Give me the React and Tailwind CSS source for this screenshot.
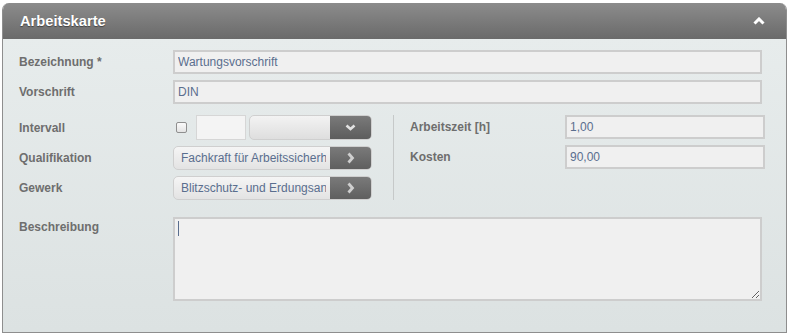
import React from "react";

const font = { fontFamily: '"Liberation Sans", Arial, sans-serif' };

function Label({ children, className = "" }) {
  return (
    <div className={`w-[154px] shrink-0 text-[12px] font-bold leading-[16px] text-[#6e6e6e] ${className}`}>
      {children}
    </div>
  );
}

function TextInput({ value, className = "" }) {
  return (
    <input
      readOnly
      value={value}
      className={`h-[24px] border-2 border-[#cdcdcd] bg-[#f0f0f0] px-[3px] text-[12px] text-[#5a6e8e] outline-none ${className}`}
    />
  );
}

function ChevronDown() {
  return (
    <svg width="11" height="7" viewBox="0 0 11 7">
      <polyline points="1.5,1.5 5.5,5 9.5,1.5" fill="none" stroke="#e2e2e2" strokeWidth="2.6" />
    </svg>
  );
}

function ChevronRight() {
  return (
    <svg width="8" height="12" viewBox="0 0 8 12">
      <polyline points="1.5,1.5 5.5,6 1.5,10.5" fill="none" stroke="#cfcfcf" strokeWidth="2.8" />
    </svg>
  );
}

// long names get cut off by the button, as in the original form
function PickerButton({ text }) {
  return (
    <div className="flex h-[24px] w-[199px] overflow-hidden rounded-[5px] border border-[#cfcfcf] bg-gradient-to-b from-[#f5f5f5] to-[#e3e3e3]">
      <div className="mr-[4px] flex-1 overflow-hidden whitespace-nowrap pl-[7px] text-[12px] leading-[22px] text-[#5a6e8e]">
        {text}
      </div>
      <div className="flex w-[41px] shrink-0 items-center justify-center bg-gradient-to-b from-[#7a7a7a] to-[#5f5f5f]">
        <ChevronRight />
      </div>
    </div>
  );
}

export default function App() {
  return (
    <div style={font} className="h-[336px] w-[791px] bg-white pt-[3px] pl-[2px]">
      <div className="w-[785px] overflow-hidden rounded-t-[7px] border-x border-b border-[#8e8e8e]">
        {/* header */}
        <div className="flex h-[36px] items-center justify-between bg-gradient-to-b from-[#8c8c8c] to-[#6a6a6a] pl-[17px] pr-[21px]">
          <span className="text-[14.7px] font-bold text-white [text-shadow:0_1px_1px_rgba(0,0,0,0.45)]">
            Arbeitskarte
          </span>
          <svg width="12" height="8" viewBox="0 0 12 8">
            <polyline points="1.5,6.5 6,2 10.5,6.5" fill="none" stroke="#ffffff" strokeWidth="3" />
          </svg>
        </div>

        {/* body */}
        <div className="flex flex-col bg-gradient-to-b from-[#e7ecec] to-[#dce2e2] pt-[11px] pb-[31px] pl-[16px]">
          <div className="flex items-center">
            <Label>Bezeichnung *</Label>
            <TextInput value="Wartungsvorschrift" className="w-[589px]" />
          </div>
          <div className="mt-[6px] flex items-center">
            <Label>Vorschrift</Label>
            <TextInput value="DIN" className="w-[589px]" />
          </div>

          <div className="mt-[11px] flex">
            {/* left column */}
            <div className="flex w-[374px] flex-col gap-[6px]">
              <div className="flex h-[25px] items-center">
                <Label>Intervall</Label>
                <div className="ml-[3px] h-[11px] w-[11px] rounded-[2px] border border-[#8f8f8f] bg-gradient-to-b from-[#fafafa] to-[#e4e4e4]" />
                <div className="ml-[9px] h-[25px] w-[50px] border border-[#d6d6d6] bg-[#f4f4f4]" />
                <div className="ml-[3px] flex h-[25px] w-[123px] overflow-hidden rounded-[5px] border border-[#cfcfcf] bg-gradient-to-b from-[#f3f3f3] to-[#dedede]">
                  <div className="flex-1" />
                  <div className="flex w-[41px] items-center justify-center bg-gradient-to-b from-[#7a7a7a] to-[#5d5d5d]">
                    <ChevronDown />
                  </div>
                </div>
              </div>
              <div className="flex items-center">
                <Label>Qualifikation</Label>
                <PickerButton text="Fachkraft für Arbeitssicherheit" />
              </div>
              <div className="flex items-center">
                <Label>Gewerk</Label>
                <PickerButton text="Blitzschutz- und Erdungsanlagen" />
              </div>
            </div>

            {/* divider */}
            <div className="w-px bg-[#c6c9c9]" />

            {/* right column */}
            <div className="flex flex-col gap-[6px] pl-[16px]">
              <div className="flex items-center">
                <Label className="w-[155px]">Arbeitszeit [h]</Label>
                <TextInput value="1,00" className="w-[200px]" />
              </div>
              <div className="flex items-center">
                <Label className="w-[155px]">Kosten</Label>
                <TextInput value="90,00" className="w-[200px]" />
              </div>
            </div>
          </div>

          <div className="mt-[17px] flex">
            <Label className="pt-[2px]">Beschreibung</Label>
            <div className="relative">
              <textarea
                readOnly
                className="block h-[84px] w-[589px] resize border-2 border-[#cdcdcd] bg-[#f0f0f0] outline-none"
              />
              <span className="absolute left-[5px] top-[4px] h-[15px] w-px bg-[#5a6e8e]" />
            </div>
          </div>
        </div>
      </div>
    </div>
  );
}
